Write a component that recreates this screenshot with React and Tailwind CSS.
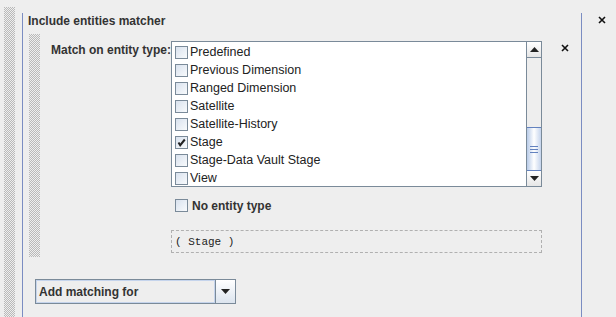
import React from "react";

const items = [
  { name: "Predefined", checked: false },
  { name: "Previous Dimension", checked: false },
  { name: "Ranged Dimension", checked: false },
  { name: "Satellite", checked: false },
  { name: "Satellite-History", checked: false },
  { name: "Stage", checked: true },
  { name: "Stage-Data Vault Stage", checked: false },
  { name: "View", checked: false },
];

// dotted grip texture (1px checker)
const Dots = ({ id }) => (
  <svg width="100%" height="100%" className="block" shapeRendering="crispEdges">
    <defs>
      <pattern id={id} width="2" height="2" patternUnits="userSpaceOnUse">
        <rect x="0" y="0" width="1" height="1" fill="#b9b9b9" />
        <rect x="1" y="1" width="1" height="1" fill="#b9b9b9" />
      </pattern>
    </defs>
    <rect width="100%" height="100%" fill={`url(#${id})`} />
  </svg>
);

const Close = () => (
  <svg width="8" height="8" viewBox="0 0 8 8" className="block">
    <path d="M1 1 L7 7 M7 1 L1 7" stroke="#111" strokeWidth="1.6" />
  </svg>
);

const Checkbox = ({ checked }) => (
  <div className="w-[13px] h-[13px] shrink-0 border border-[#7a8a99] bg-gradient-to-br from-[#d9e2ee] to-[#f8fafc] flex items-center justify-center">
    {checked && (
      <svg width="9" height="9" viewBox="0 0 9 9">
        <path d="M1.5 4.5 L3.2 7.2 L7.8 1.5" fill="none" stroke="#222" strokeWidth="2" />
      </svg>
    )}
  </div>
);

const Arrow = ({ down }) => (
  <svg width="9" height="5" viewBox="0 0 9 5">
    <path d={down ? "M0 0 H9 L4.5 5 Z" : "M0 5 H9 L4.5 0 Z"} fill="#222" />
  </svg>
);

export default function App() {
  return (
    <div className="w-[616px] h-[317px] overflow-hidden bg-[#eeeeee] flex text-[12px] text-[#333] font-['Liberation_Sans',Arial,sans-serif]">
      <div className="ml-[4px] mt-[7px] w-[11px]">
        <Dots id="outer" />
      </div>
      <div className="ml-[7px] mt-[13px] w-[560px] border-l border-r border-[#7b8dc2] flex flex-col pl-[5px]">
        <div className="mt-[1px] h-[14px] leading-[14px] font-bold">Include entities matcher</div>
        <div className="mt-[6px] flex">
          <div className="ml-[1px] w-[11px] h-[223px]">
            <Dots id="inner" />
          </div>
          <div className="ml-[11px] pt-[7px] flex">
            <div className="w-[120px] mt-[2px] h-[14px] leading-[14px] font-bold whitespace-nowrap">
              Match on entity type:
            </div>
            <div className="flex flex-col">
              <div className="w-[371px] h-[146px] border border-[#7a8a99] bg-white flex overflow-hidden">
                <div className="flex-1 flex flex-col pt-[1px]">
                  {items.map((it) => (
                    <div key={it.name} className="h-[18px] flex items-center pl-[3px] gap-[2px] shrink-0">
                      <Checkbox checked={it.checked} />
                      <span className="leading-[14px] text-[12.5px] text-[#222]">{it.name}</span>
                    </div>
                  ))}
                </div>
                <div className="w-[15px] border-l border-[#7a8a99] bg-[#eeeeee] flex flex-col">
                  <div className="h-[16px] border-b border-[#7a8a99] flex items-center justify-center bg-gradient-to-b from-white to-[#e6e6e6]">
                    <Arrow />
                  </div>
                  <div className="flex-1" />
                  <div className="h-[44px] border-y border-[#6382bf] bg-gradient-to-r from-[#b8cbe8] via-white to-[#c5d4ec] flex flex-col items-center justify-center gap-[2px]">
                    <div className="w-[8px] h-[1px] bg-[#6382bf]" />
                    <div className="w-[8px] h-[1px] bg-[#6382bf]" />
                    <div className="w-[8px] h-[1px] bg-[#6382bf]" />
                  </div>
                  <div className="h-[15px] flex items-center justify-center bg-gradient-to-b from-white to-[#e6e6e6]">
                    <Arrow down />
                  </div>
                </div>
              </div>
              <div className="mt-[12px] ml-[4px] flex items-center gap-[4px] h-[13px]">
                <Checkbox />
                <span className="font-bold leading-[14px]">No entity type</span>
              </div>
              <div className="mt-[18px] w-[371px] h-[23px] border border-dashed border-[#b0b0b0] flex items-center pl-[3px] pt-[1px] font-['Liberation_Mono',monospace] text-[11px] text-[#222]">
                ( Stage )
              </div>
            </div>
            <div className="ml-[19px] mt-[3px]">
              <Close />
            </div>
          </div>
        </div>
        <div className="mt-[22px] ml-[7px] w-[201px] h-[25px] border border-[#7a8a99] flex">
          <div className="flex-1 border border-[#c5d4ec] bg-[#eeeeee] flex items-center pl-[2px] font-bold">
            Add matching for
          </div>
          <div className="w-[20px] border-l border-[#7a8a99] bg-gradient-to-b from-white to-[#dce4ee] flex items-center justify-center">
            <Arrow down />
          </div>
        </div>
      </div>
      <div className="ml-[16px] mt-[16px]">
        <Close />
      </div>
    </div>
  );
}
